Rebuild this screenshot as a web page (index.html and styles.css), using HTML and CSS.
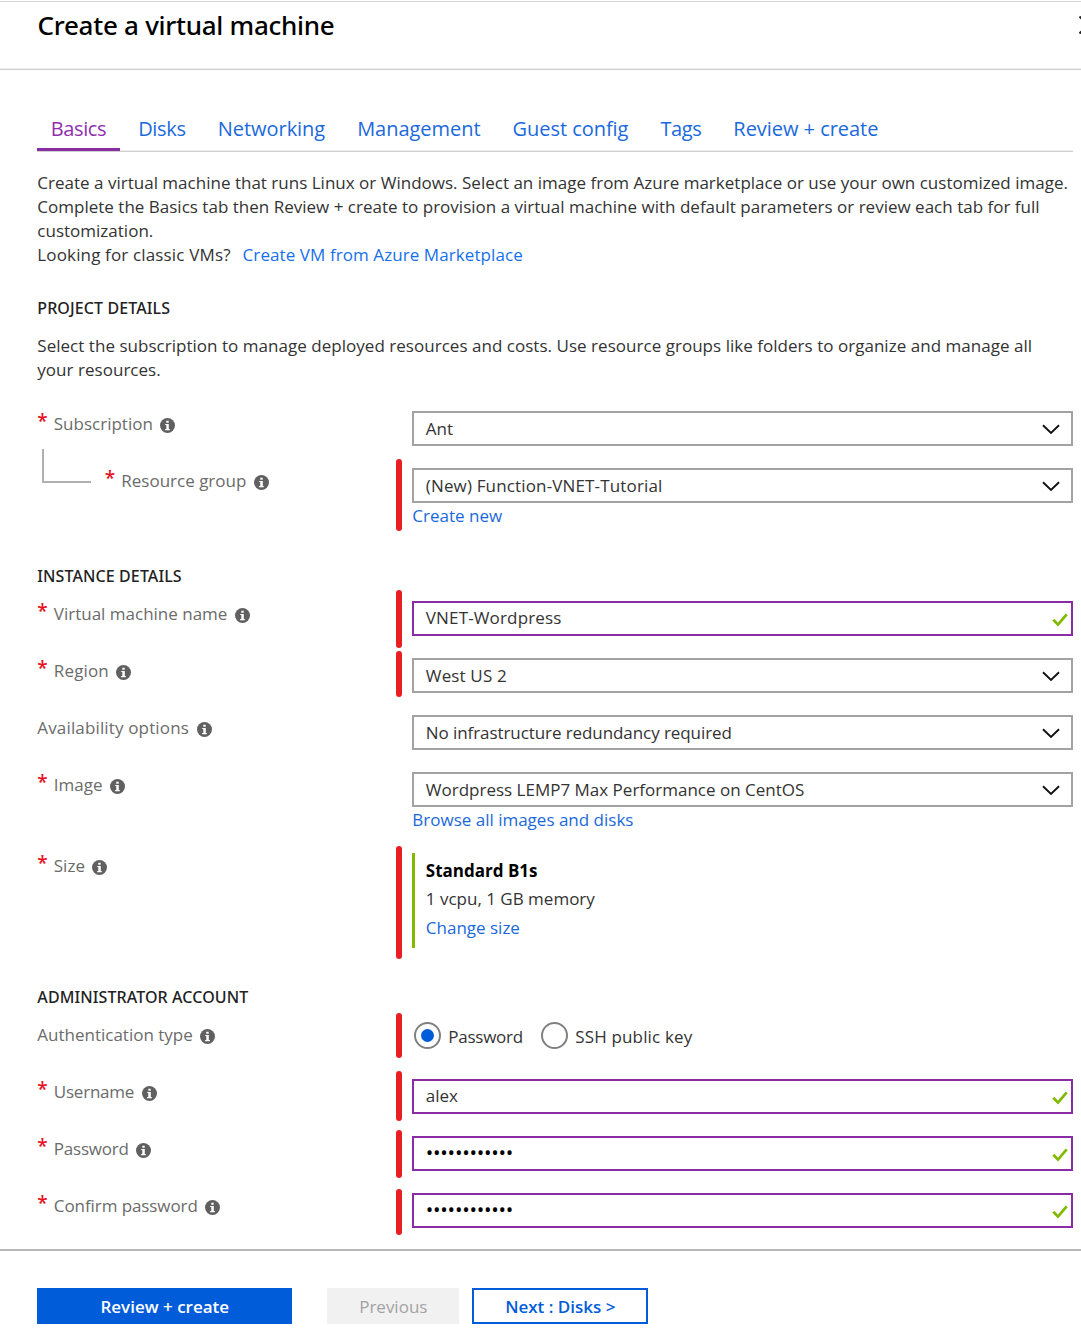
FILE: index.html
```html
<!DOCTYPE html>
<html lang="en">
<head>
<meta charset="utf-8">
<title>Create a virtual machine</title>
<link rel="stylesheet" href="styles.css">
</head>
<body>
<svg class="sprite" aria-hidden="true">
  <symbol id="info" viewBox="0 0 15 15"><circle cx="7.5" cy="7.5" r="7.5" fill="#606060"/><path d="M6.3 2.8h2.4v2H6.3zM5.2 6h3.6v5h1v1.2H5.1V11h1.2V7.1H5.2z" fill="#fff"/></symbol>
  <symbol id="chevron" viewBox="0 0 18 11"><path d="M1 1.2l8 7.8 8-7.8" fill="none" stroke="#111" stroke-width="1.9"/></symbol>
  <symbol id="check" viewBox="0 0 16 14"><path d="M1.3 6.7l4.7 4.9L14.7 1.4" fill="none" stroke="#7fba00" stroke-width="2.7"/></symbol>
</svg>
<div class="blade">
  <header class="header">
    <h1 class="title">Create a virtual machine</h1>
    <svg class="close" viewBox="0 0 18 18"><path d="M0.5 0.5l17 17M17.5 0.5l-17 17" stroke="#222" stroke-width="2"/></svg>
  </header>

  <main class="content">
    <nav class="tabs">
      <a class="tab tab-active tight-more">Basics</a>
      <a class="tab tight">Disks</a>
      <a class="tab">Networking</a>
      <a class="tab">Management</a>
      <a class="tab">Guest config</a>
      <a class="tab tight-more">Tags</a>
      <a class="tab">Review + create</a>
    </nav>

    <p class="intro">Create a virtual machine that runs Linux or Windows. Select an image from Azure marketplace or use your own customized image.<br>Complete the Basics tab then Review + create to provision a virtual machine with default parameters or review each tab for full<br>customization.<br><span class="wide-text">Looking for classic VMs?</span> <a class="link intro-link">Create VM from Azure Marketplace</a></p>

    <section class="section">
      <h2 class="heading">PROJECT DETAILS</h2>
      <p class="description">Select the subscription to manage deployed resources and costs. Use resource groups like folders to organize and manage all<br>your resources.</p>
      <div class="row">
        <div class="label"><span class="star">*</span>Subscription<svg class="info"><use href="#info"/></svg></div>
        <div class="field"><div class="box">Ant<svg class="chevron"><use href="#chevron"/></svg></div></div>
      </div>
      <div class="row row-linked">
        <div class="label"><span class="elbow"></span><span class="star">*</span>Resource group<svg class="info"><use href="#info"/></svg></div>
        <div class="field"><i class="mark mark-group"></i><div class="box wide-text">(New) Function-VNET-Tutorial<svg class="chevron"><use href="#chevron"/></svg></div><a class="link field-link">Create new</a></div>
      </div>
    </section>

    <section class="section section-instance">
      <h2 class="heading">INSTANCE DETAILS</h2>
      <div class="row">
        <div class="label"><span class="star">*</span>Virtual machine name<svg class="info"><use href="#info"/></svg></div>
        <div class="field"><i class="mark mark-name"></i><div class="box box-valid wide-text">VNET-Wordpress<svg class="check"><use href="#check"/></svg></div></div>
      </div>
      <div class="row">
        <div class="label wide-text"><span class="star">*</span>Region<svg class="info"><use href="#info"/></svg></div>
        <div class="field"><i class="mark mark-region"></i><div class="box wide-text">West US 2<svg class="chevron"><use href="#chevron"/></svg></div></div>
      </div>
      <div class="row">
        <div class="label wide-text">Availability options<svg class="info"><use href="#info"/></svg></div>
        <div class="field"><div class="box tight-text">No infrastructure redundancy required<svg class="chevron"><use href="#chevron"/></svg></div></div>
      </div>
      <div class="row row-linked">
        <div class="label"><span class="star">*</span>Image<svg class="info"><use href="#info"/></svg></div>
        <div class="field"><div class="box">Wordpress LEMP7 Max Performance on CentOS<svg class="chevron"><use href="#chevron"/></svg></div><a class="link field-link">Browse all images and disks</a></div>
      </div>
      <div class="row row-size">
        <div class="label"><span class="star">*</span>Size<svg class="info"><use href="#info"/></svg></div>
        <div class="field"><i class="mark mark-size"></i>
          <div class="size"><b class="size-name">Standard B1s</b><span>1 vcpu, 1 GB memory</span><a class="link">Change size</a></div>
        </div>
      </div>
    </section>

    <section class="section section-admin">
      <h2 class="heading">ADMINISTRATOR ACCOUNT</h2>
      <div class="row">
        <div class="label">Authentication type<svg class="info"><use href="#info"/></svg></div>
        <div class="field radios"><i class="mark mark-auth"></i>
          <span class="radio radio-on"></span><span class="radio-text radio-first">Password</span>
          <span class="radio"></span><span class="radio-text wide-text">SSH public key</span>
        </div>
      </div>
      <div class="row">
        <div class="label label-tight"><span class="star">*</span>Username<svg class="info"><use href="#info"/></svg></div>
        <div class="field"><i class="mark mark-user"></i><div class="box box-valid">alex<svg class="check"><use href="#check"/></svg></div></div>
      </div>
      <div class="row">
        <div class="label label-tight"><span class="star">*</span>Password<svg class="info"><use href="#info"/></svg></div>
        <div class="field"><i class="mark mark-pass"></i><div class="box box-valid"><span class="dots">••••••••••••</span><svg class="check"><use href="#check"/></svg></div></div>
      </div>
      <div class="row">
        <div class="label tight-text"><span class="star">*</span>Confirm password<svg class="info"><use href="#info"/></svg></div>
        <div class="field"><i class="mark mark-confirm"></i><div class="box box-valid"><span class="dots">••••••••••••</span><svg class="check"><use href="#check"/></svg></div></div>
      </div>
    </section>
  </main>

  <footer class="footer">
    <button class="button button-primary">Review + create</button>
    <button class="button button-disabled">Previous</button>
    <button class="button button-next">Next : Disks &gt;</button>
  </footer>
</div>
</body>
</html>
```
FILE: styles.css
```css
* { box-sizing: border-box; }

body {
  margin: 0;
  background: #fff;
  color: #333;
  font: 17px/24px "Open Sans", "Noto Sans", sans-serif;
}

h1, h2, p { margin: 0; }

.sprite { display: none; }

.blade {
  display: flex;
  flex-direction: column;
  height: 1341px;
  padding-top: 1px;
  overflow: hidden;
}

/* Header */
.header {
  display: flex;
  flex: none;
  justify-content: space-between;
  height: 69px;
  padding: 5px 0 0 37.5px;
  border-top: 1px solid #d4d4d4;
  border-bottom: 1px solid #d0d0d0;
  box-shadow: inset 0 -1px #ececec;
}
.title {
  color: #000;
  font: 500 26px/36px "Noto Sans", "Open Sans", sans-serif;
  letter-spacing: -0.27px;
}
.close {
  flex: none;
  width: 18px;
  height: 18px;
  margin: 9px -16px 0 0;
}

.content {
  flex: none;
  width: 1073.3px;
  height: 1179px;
  padding: 38px 0 0 37.3px;
}

/* Tabs */
.tabs {
  display: flex;
  gap: 5px;
  height: 44px;
  border-bottom: 1px solid #d0d0d0;
  box-shadow: inset 0 -1px #ececec;
}
.tab {
  height: 43px;
  padding: 6px 13.5px 0;
  color: #1a69dc;
  font-size: 20px;
  line-height: 30px;
  letter-spacing: -0.04px;
}
.tab-active {
  color: #8f2fae;
  border-bottom: 3px solid #8a2da5;
}
.tight { letter-spacing: -0.3px; }
.tight-more { letter-spacing: -0.4px; }

/* Text */
.intro, .description { white-space: nowrap; }
.intro { margin-top: 19px; letter-spacing: 0.01px; }
.link { color: #1a69dc; }
.intro-link { margin-left: 7.5px; color: #1570ea; letter-spacing: 0.08px; }
.heading {
  color: #222;
  font: 500 16px/22px "Noto Sans", "Open Sans", sans-serif;
  letter-spacing: 0.1px;
}
.section { margin-top: 30px; }
.description { margin: 15px 0 29px; letter-spacing: 0.03px; }
.section-instance { margin-top: 16px; }
.section-instance .heading,
.section-admin .heading { margin-bottom: 14px; }
.section-admin { margin-top: 38px; }
.wide-text { letter-spacing: 0.15px; }
.tight-text { letter-spacing: -0.08px; }

/* Form rows */
.row {
  display: grid;
  grid-template-columns: 375px 1fr;
  height: 57px;
}
.row-linked { height: 81px; }
.row-size { height: 95px; }
.label {
  display: flex;
  align-items: flex-start;
  padding-top: 1px;
  color: #6b6b6b;
  white-space: nowrap;
}
.label-tight { letter-spacing: -0.22px; }
.star {
  width: 16.5px;
  margin-top: -3px;
  color: #e81123;
  font-size: 19px;
  font-weight: 600;
}
.info {
  width: 15px;
  height: 15px;
  margin: 6px 0 0 7.5px;
}
.elbow {
  width: 49px;
  height: 34px;
  margin: -20px 13.5px 0 5px;
  border: solid #b0b0b0;
  border-width: 0 0 2px 2px;
}
.field { position: relative; }
.field-link { display: block; padding-top: 1px; }
.box {
  display: flex;
  align-items: center;
  justify-content: space-between;
  height: 35px;
  padding: 1px 11px 0 11.5px;
  border: 2px solid #a3a3a3;
  white-space: nowrap;
}
.box-valid {
  padding: 0 3.5px 2px 11.5px;
  border-color: #8a2da5;
}
.chevron { width: 18px; height: 11px; }
.check { width: 16px; height: 14px; margin-top: 5px; }
.dots {
  display: inline-block;
  color: #000;
  font-size: 20px;
  letter-spacing: -0.25px;
}

/* Hand-drawn markers over the gutter beside a field */
.mark {
  position: absolute;
  left: -16.3px;
  width: 6px;
  border-radius: 3px;
  background: #e81e22;
}
.mark-group { top: -9px; height: 72px; }
.mark-name { top: -11px; height: 58px; }
.mark-region { top: -7px; height: 46px; }
.mark-size { top: -7px; height: 113px; }
.mark-auth { top: -9px; height: 45px; }
.mark-user { top: -8px; height: 50px; }
.mark-pass { top: -6px; height: 48px; }
.mark-confirm { top: -4px; height: 46px; }

.size {
  display: flex;
  flex-direction: column;
  height: 95px;
  padding: 4px 0 0 10.5px;
  border-left: 3px solid #7fba00;
  line-height: 28.4px;
}
.size-name { color: #000; }

.radios { display: flex; align-items: flex-start; padding-left: 2px; }
.radio {
  display: grid;
  flex: none;
  place-items: center;
  width: 27px;
  height: 27px;
  border: 2px solid #808080;
  border-radius: 50%;
}
.radio-on::before {
  width: 13px;
  height: 13px;
  border-radius: 50%;
  background: #015cda;
  content: "";
}
.radio-text { margin: 3px 0 0 7px; }
.radio-first { width: 93px; letter-spacing: -0.25px; }

/* Footer */
.footer {
  display: flex;
  flex: none;
  height: 92px;
  padding: 37px 0 0 37.3px;
  border-top: 2px solid #b8b8b8;
}
.button {
  height: 36px;
  padding: 1px 0 0;
  border: 0;
  font: 600 17px/35px "Open Sans", "Noto Sans", sans-serif;
}
.button-primary { width: 255px; background: #015cda; color: #fff; }
.button-disabled { width: 132px; margin: 0 13px 0 35px; background: #f1f1f1; color: #a3a3a3; font-weight: 400; }
.button-next { width: 176px; border: 2px solid #015cda; background: #fff; color: #015cda; line-height: 31px; }
```
